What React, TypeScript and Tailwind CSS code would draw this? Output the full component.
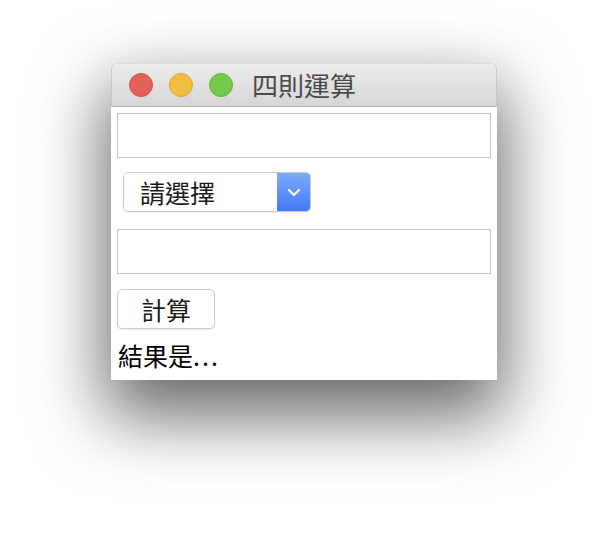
import React from "react";

export default function App() {
  const font = { fontFamily: '"Noto Sans CJK TC", "Noto Sans", sans-serif' };
  return (
    <div className="w-[608px] h-[540px] bg-white overflow-hidden pt-[63px] pl-[111px]" style={font}>
      <div className="w-[386px] rounded-t-[6px] shadow-[0_30px_70px_6px_rgba(0,0,0,0.6)] bg-white">
        <div className="h-[44px] rounded-t-[6px] bg-gradient-to-b from-[#ececec] to-[#d6d6d6] border-b border-[#b3b3b3] flex items-center pl-[17px] border-t border-x border-t-[#dcdcdc] border-x-[#c8c8c8]">
          <div className="w-[24px] h-[24px] rounded-full bg-[#e5625b] border border-[#d2534b]" />
          <div className="w-[24px] h-[24px] rounded-full bg-[#f2be40] border border-[#dca63a] ml-[16px]" />
          <div className="w-[24px] h-[24px] rounded-full bg-[#76c94b] border border-[#63b13b] ml-[16px]" />
          <div className="ml-[19px] text-[26px] leading-none text-[#4a4a4a] -mt-[1px]">四則運算</div>
        </div>
        <div className="flex flex-col items-start pl-[6px] pr-[6px] pt-[6px] h-[273px]">
          <div className="w-[374px] h-[45px] border border-[#c2c2c2] bg-white" />
          <div className="ml-[6px] mt-[14px] w-[188px] h-[40px] rounded-[5px] border border-[#c8c8c8] flex overflow-hidden shadow-[0_1px_1px_rgba(0,0,0,0.08)]">
            <div className="flex-1 bg-white flex items-center pl-[16px] text-[25px] text-[#1a1a1a] leading-none">請選擇</div>
            <div className="w-[33px] bg-gradient-to-b from-[#7eaaf9] to-[#4578f5] flex items-center justify-center">
              <svg width="14" height="10" viewBox="0 0 14 10">
                <path d="M2 3 L7 8 L12 3" stroke="white" strokeWidth="2.2" fill="none" strokeLinecap="round" strokeLinejoin="round" />
              </svg>
            </div>
          </div>
          <div className="mt-[17px] w-[374px] h-[45px] border border-[#c2c2c2] bg-white" />
          <div className="mt-[15px] w-[98px] h-[40px] rounded-[5px] border border-[#cbcbcb] bg-white flex items-center justify-center text-[25px] text-[#1a1a1a] leading-none shadow-[0_1px_1px_rgba(0,0,0,0.08)]">計算</div>
          <div className="mt-[14px] ml-[1px] text-[25px] leading-none text-black">
            結果是<span className="tracking-[2px]">...</span>
          </div>
        </div>
      </div>
    </div>
  );
}
